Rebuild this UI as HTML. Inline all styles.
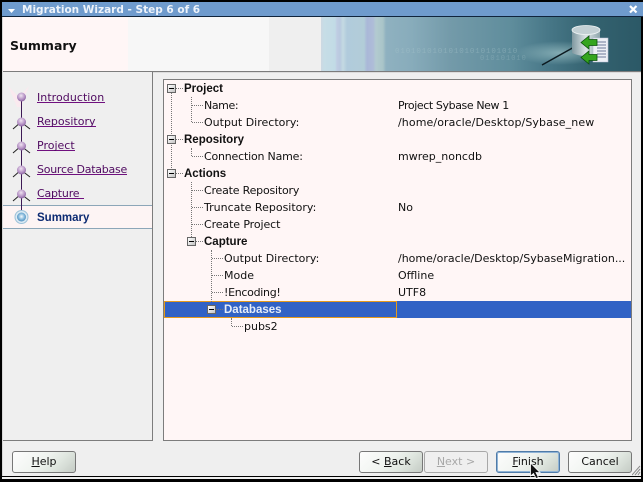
<!DOCTYPE html>
<html><head><meta charset="utf-8">
<style>
html,body{margin:0;padding:0;width:643px;height:482px;overflow:hidden;background:#000}
#w{position:relative;width:643px;height:482px;overflow:hidden;background:#efefef;font-family:"DejaVu Sans","Liberation Sans",sans-serif;font-size:11px;color:#111}
.a{position:absolute}
.t{position:absolute;white-space:nowrap;line-height:14px;height:14px}
.b{font-family:"Liberation Sans",sans-serif;font-weight:bold;font-size:11.500px}
.l{position:absolute;white-space:nowrap;left:37px;line-height:14px;color:#4f0a60;border-bottom:1px solid #70107f;height:11px}
.bx{position:absolute;width:7px;height:7px;border:1px solid #666;background:linear-gradient(135deg,#fff,#c4c4c4)}
.bx:after{content:"";position:absolute;left:1px;top:3px;width:5px;height:1px;background:#000}
.h{position:absolute;height:0;border-top:1px dotted #777}
.v{position:absolute;width:0;border-left:1px dotted #777}
.btn{position:absolute;top:451px;height:20px;border:1px solid #777;border-radius:3px;background:linear-gradient(135deg,#fdfdfd 0%,#f0f4f0 45%,#dfe6df 70%,#c4cbc4 100%);text-align:center;line-height:20px;color:#111}
u{text-decoration:underline}
</style></head><body>
<div id="w">
<!-- window frame -->
<div class="a" style="left:0;top:0;width:643px;height:2px;background:#000"></div>
<div class="a" style="left:0;top:2px;width:643px;height:14px;background:#6f9bcd"></div>
<div class="a" style="left:0;top:16px;width:643px;height:1px;background:#10243c"></div>
<svg class="a" style="left:8px;top:9px" width="8" height="5"><path d="M0 0H7L3.500 4Z" fill="#fff"/></svg>
<div class="t" style="left:22px;top:3px;color:#eef3fa;font-weight:bold;font-size:10.500px">Migration Wizard - Step 6 of 6</div>
<svg class="a" style="left:629px;top:5px" width="9" height="9"><path d="M1 1L7.500 7.500M7.500 1L1 7.500" stroke="#fff" stroke-width="2.200"/></svg>

<!-- header -->
<div class="a" style="left:3px;top:17px;width:125px;height:54px;background:#fff6f6"></div>
<div class="a" style="left:128px;top:17px;width:141px;height:54px;background:#f7f7f7"></div>
<div class="a" style="left:269px;top:17px;width:52px;height:54px;background:#efefef"></div>
<div class="a" style="left:321px;top:17px;width:322px;height:54px;background:linear-gradient(90deg,#cdd8e2 0,#c6dde6 3px,#c2dbe6 14px,#bfcde3 16px,#b9c9df 19px,#c4dae2 22px,#b1cbdc 26px,#b2cdd8 43px,#aab8d8 46px,#aebcd8 52px,#b3cbd0 55px,#a9c4c8 62px,#8fb1c0 65px,#88acbb 90px,#739aa9 130px,#5f8d9c 190px,#467686 230px,#34626f 270px,#2b5866 322px)"></div>
<div class="t" style="left:395px;top:45px;font-family:'Liberation Mono',monospace;font-size:7.500px;color:#a9c6cc;opacity:.4;letter-spacing:.85px">01010101010101010101010</div>
<div class="t" style="left:480px;top:52px;font-family:'Liberation Mono',monospace;font-size:7px;color:#a9c6cc;opacity:.3;letter-spacing:1px">010101010</div>
<svg class="a" style="left:430px;top:17px" width="213" height="54">
  <defs>
    <linearGradient id="cy" x1="0" x2="1" y1="0" y2="0"><stop offset="0" stop-color="#7f98a0"/><stop offset=".5" stop-color="#dce4e6"/><stop offset="1" stop-color="#8da5ab"/></linearGradient>
    <radialGradient id="gl" cx=".5" cy=".5" r=".5"><stop offset="0" stop-color="#9fc4c8" stop-opacity=".7"/><stop offset="1" stop-color="#9fc4c8" stop-opacity="0"/></radialGradient>
  </defs>
  <ellipse cx="130" cy="36" rx="45" ry="12" fill="url(#gl)"/>
  <path d="M112 48L146 29" stroke="#0c1a20" stroke-width="1.500"/>
  <path d="M142 13V36Q156 42 170 36V13Z" fill="url(#cy)"/>
  <ellipse cx="156" cy="13" rx="14" ry="4.500" fill="#c3d0d4" stroke="#eef3f4" stroke-width=".8"/>
  <path d="M163 21H178V45H163Z" fill="#eef0f6" stroke="#b9bfd6" stroke-width=".6"/>
  <path d="M167 25H176M167 28H176M167 31H176M167 34H176M167 37H176M167 40H176" stroke="#6f7a99" stroke-width=".9"/>
  <path d="M151 25.500L159 19V22.500H167V28.500H159V32Z" fill="#35a51f" stroke="#0b4f0c" stroke-width=".8"/>
  <path d="M151 40.500L159 34V37.500H167V43.500H159V47Z" fill="#35a51f" stroke="#0b4f0c" stroke-width=".8"/>
</svg>
<div class="t" style="left:10px;top:38px;font-weight:bold;font-size:12.500px;line-height:16px;height:16px;color:#111">Summary</div>

<!-- left frame over header -->
<div class="a" style="left:0;top:2px;width:2px;height:480px;background:#000"></div>
<div class="a" style="left:2px;top:17px;width:1px;height:459px;background:#d8d8d8"></div>
<div class="a" style="left:641px;top:17px;width:2px;height:465px;background:#000"></div>

<div class="a" style="left:3px;top:71px;width:638px;height:1px;background:#7c7c7c"></div>
<div class="a" style="left:3px;top:72px;width:638px;height:1px;background:#dcdcdc"></div>

<!-- left nav panel -->
<div class="a" style="left:3px;top:72px;width:149px;height:368px;background:#efefef"></div>
<div class="a" style="left:152px;top:72px;width:1px;height:369px;background:#7c7c7c"></div>
<div class="a" style="left:3px;top:440px;width:150px;height:1px;background:#7c7c7c"></div>
<div class="a" style="left:3px;top:205px;width:149px;height:24px;background:#fdf4f4;border-top:1px solid #8ca6b8;border-bottom:1px solid #8ca6b8;box-sizing:border-box"></div>
<svg class="a" style="left:3px;top:85px" width="40" height="145">
  <defs><radialGradient id="ball" cx=".45" cy=".35" r=".7"><stop offset="0" stop-color="#f0e4f2"/><stop offset=".6" stop-color="#b592c4"/><stop offset="1" stop-color="#80589a"/></radialGradient>
  <radialGradient id="cur" cx=".5" cy=".45" r=".6"><stop offset="0" stop-color="#f4fafd"/><stop offset=".6" stop-color="#7cb3d8"/><stop offset="1" stop-color="#4a86b8"/></radialGradient></defs>
  <path d="M5 1L16 12L26 1L18 22H14Z" fill="#fbe9ee" opacity=".9"/>
  <path d="M18.500 12V128" stroke="#3d1a55" stroke-width="1"/>
  <path d="M10 44L18 37L27 44M10 68L18 61L27 68M10 92L18 85L27 92M10 116L18 109L27 116" stroke="#222" stroke-width="1" fill="none"/>
  <circle cx="18.500" cy="12" r="4.500" fill="url(#ball)"/>
  <circle cx="18.500" cy="37" r="4.500" fill="url(#ball)"/>
  <circle cx="18.500" cy="61" r="4.500" fill="url(#ball)"/>
  <circle cx="18.500" cy="85" r="4.500" fill="url(#ball)"/>
  <circle cx="18.500" cy="109" r="4.500" fill="url(#ball)"/>
  <circle cx="18.500" cy="132" r="6.500" fill="#dcebf4" stroke="#9cc0d8" stroke-width="1"/>
  <circle cx="18.500" cy="132" r="4.500" fill="url(#cur)"/>
</svg>
<div class="l" style="top:91px;width:68px;letter-spacing:.05px">Introduction</div>
<div class="l" style="top:115px;width:59px">Repository</div>
<div class="l" style="top:139px;width:38px">Project</div>
<div class="l" style="top:163px;width:90px;letter-spacing:-.25px">Source Database</div>
<div class="l" style="top:187px;width:47px;letter-spacing:-.2px">Capture</div>
<div class="t b" style="left:37px;top:211px;color:#0c2a72">Summary</div>

<!-- tree panel -->
<div class="a" style="left:163px;top:79px;width:467px;height:360px;background:#fff6f6;border:1px solid #7c7c7c"></div>
<div class="a" style="left:164px;top:301px;width:467px;height:17px;background:#3162c5"></div>
<div class="a" style="left:164px;top:301px;width:233px;height:17px;box-sizing:border-box;border:1px solid #e59a1c"></div>

<!-- tree lines -->
<div class="v" style="left:171px;top:93px;height:85px"></div>
<div class="v" style="left:191px;top:97px;height:25px"></div>
<div class="v" style="left:191px;top:148px;height:8px"></div>
<div class="v" style="left:191px;top:182px;height:55px"></div>
<div class="v" style="left:211px;top:250px;height:52px"></div>
<div class="v" style="left:231px;top:318px;height:8px"></div>
<div class="h" style="left:176px;top:88px;width:7px"></div>
<div class="h" style="left:176px;top:139px;width:7px"></div>
<div class="h" style="left:176px;top:173px;width:7px"></div>
<div class="h" style="left:192px;top:105px;width:11px"></div>
<div class="h" style="left:192px;top:122px;width:11px"></div>
<div class="h" style="left:192px;top:156px;width:11px"></div>
<div class="h" style="left:192px;top:190px;width:11px"></div>
<div class="h" style="left:192px;top:207px;width:11px"></div>
<div class="h" style="left:192px;top:224px;width:11px"></div>
<div class="h" style="left:196px;top:241px;width:7px"></div>
<div class="h" style="left:212px;top:258px;width:11px"></div>
<div class="h" style="left:212px;top:275px;width:11px"></div>
<div class="h" style="left:212px;top:292px;width:11px"></div>
<div class="h" style="left:216px;top:309px;width:7px"></div>
<div class="h" style="left:232px;top:326px;width:11px"></div>

<div class="bx" style="left:167px;top:84px"></div>
<div class="bx" style="left:167px;top:135px"></div>
<div class="bx" style="left:167px;top:169px"></div>
<div class="bx" style="left:187px;top:237px"></div>
<div class="bx" style="left:207px;top:305px"></div>

<div class="t b" style="left:184px;top:82px">Project</div>
<div class="t" style="left:204px;top:99px;letter-spacing:-.4px">Name:</div>
<div class="t" style="left:204px;top:116px">Output Directory:</div>
<div class="t b" style="left:184px;top:133px">Repository</div>
<div class="t" style="left:204px;top:150px;letter-spacing:-.2px">Connection Name:</div>
<div class="t b" style="left:184px;top:167px">Actions</div>
<div class="t" style="left:204px;top:184px;letter-spacing:-.2px">Create Repository</div>
<div class="t" style="left:204px;top:201px">Truncate Repository:</div>
<div class="t" style="left:204px;top:218px;letter-spacing:-.1px">Create Project</div>
<div class="t b" style="left:204px;top:235px">Capture</div>
<div class="t" style="left:224px;top:252px">Output Directory:</div>
<div class="t" style="left:224px;top:269px">Mode</div>
<div class="t" style="left:224px;top:286px;letter-spacing:-.3px">!Encoding!</div>
<div class="t b" style="left:224px;top:303px;color:#e6edf8">Databases</div>
<div class="t" style="left:244px;top:320px">pubs2</div>

<div class="t" style="left:398px;top:99px;letter-spacing:-.4px">Project Sybase New 1</div>
<div class="t" style="left:398px;top:116px;letter-spacing:.1px">/home/oracle/Desktop/Sybase_new</div>
<div class="t" style="left:398px;top:150px">mwrep_noncdb</div>
<div class="t" style="left:398px;top:201px">No</div>
<div class="t" style="left:398px;top:252px;width:230px;overflow:hidden">/home/oracle/Desktop/SybaseMigration...</div>
<div class="t" style="left:398px;top:269px">Offline</div>
<div class="t" style="left:398px;top:286px">UTF8</div>

<!-- buttons -->
<div class="btn" style="left:12px;width:62px"><u>H</u>elp</div>
<div class="btn" style="left:359px;width:62px">&lt; <u>B</u>ack</div>
<div class="btn" style="left:424px;width:62px;color:#a8a8a8;border-color:#a8a8a8;background:#efefef"><u>N</u>ext &gt;</div>
<div class="btn" style="left:496px;width:62px;border:1px solid #4f7ba8;box-shadow:inset 0 0 0 1px #8fb3d6"><u>F</u>inish</div>
<div class="btn" style="left:568px;width:62px">Cancel</div>
<svg class="a" style="left:632px;top:465px" width="9" height="11"><path d="M0 10L8 1M3 10L8 4M6 10L8 7" stroke="#8a8a8a" stroke-width="1"/></svg>

<!-- bottom frame -->
<div class="a" style="left:0;top:476px;width:643px;height:1px;background:#000"></div>
<div class="a" style="left:2px;top:477px;width:639px;height:2px;background:#efefef"></div>
<div class="a" style="left:0;top:479px;width:643px;height:3px;background:#000"></div>
<svg class="a" style="left:529px;top:462px" width="14" height="18"><path d="M1.500 1V14L4.500 11.500L7 16.500L9.500 15.500L7 10.500H11Z" fill="#111" stroke="#fff" stroke-width=".8"/></svg>
</div>
</body></html>
